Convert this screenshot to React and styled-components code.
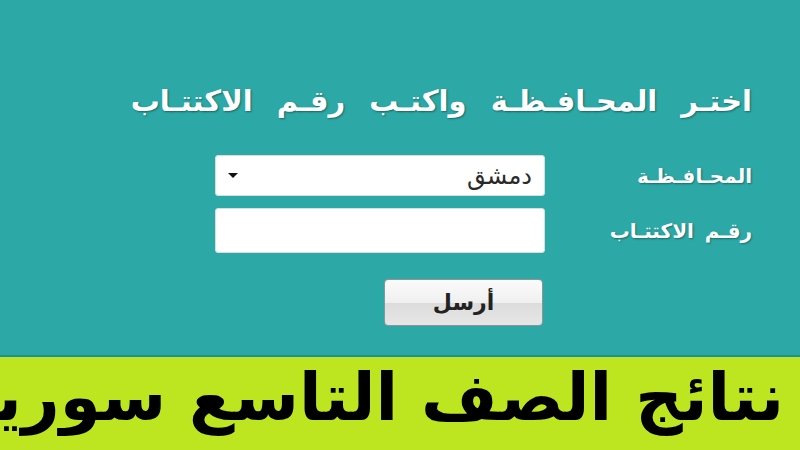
import React from "react";
import styled, { createGlobalStyle } from "styled-components";

const GlobalStyle = createGlobalStyle`
  html, body {
    margin: 0;
    padding: 0;
    width: 800px;
    height: 450px;
    overflow: hidden;
  }
  body {
    font-family: "DejaVu Sans", "Noto Sans", sans-serif;
  }
`;

const App = () => {
  return (
    <Page dir="rtl">
      <GlobalStyle />
      <Panel>
        <Title>اختـر المحـافـظـة واكتـب رقـم الاكتتـاب</Title>
        <Form onSubmit={(e) => e.preventDefault()}>
          <Label>المحـافـظـة</Label>
          <SelectBox>
            <span>دمشق</span>
            <Caret />
          </SelectBox>
          <Label>رقـم الاكتتـاب</Label>
          <TextInput type="text" />
          <span />
          <ButtonCell>
            <SendButton type="submit">أرسل</SendButton>
          </ButtonCell>
        </Form>
      </Panel>
      <Banner>
        <BannerText>نتائج الصف التاسع سوريا</BannerText>
      </Banner>
    </Page>
  );
};

export default App;

const Page = styled.div`
  width: 800px;
  height: 450px;
  display: flex;
  flex-direction: column;
  overflow: hidden;
`;

const Panel = styled.div`
  height: 357px;
  flex-shrink: 0;
  background-color: #2ca9a6;
  border-bottom: 2px solid #1e9096;
  padding: 84px 48px 0 0;
  box-sizing: border-box;
`;

const Title = styled.h2`
  margin: 0;
  font-size: 29px;
  font-weight: bold;
  word-spacing: 14px;
  color: #fff;
  text-shadow: 1px 1px 2px rgba(0, 40, 40, 0.5);
`;

const Form = styled.form`
  display: grid;
  grid-template-columns: 207px 330px;
  grid-template-rows: 41px 45px auto;
  row-gap: 12px;
  margin-top: 37px;
`;

const Label = styled.label`
  align-self: center;
  font-size: 20px;
  font-weight: bold;
  word-spacing: 4px;
  color: #fff;
  text-shadow: 1px 1px 2px rgba(0, 40, 40, 0.45);
`;

const SelectBox = styled.div`
  display: flex;
  align-items: center;
  justify-content: space-between;
  padding: 0 12px;
  background: #fff;
  border: 1px solid #d6dede;
  border-radius: 3px;
  font-size: 24px;
  color: #2a2a2a;
`;

const Caret = styled.span`
  width: 0;
  height: 0;
  border-left: 5px solid transparent;
  border-right: 5px solid transparent;
  border-top: 5px solid #111;
`;

const TextInput = styled.input`
  margin: 0;
  padding: 0;
  background: #fff;
  border: 1px solid #d6dede;
  border-radius: 3px;
  box-sizing: border-box;
`;

const ButtonCell = styled.div`
  display: flex;
  align-items: flex-start;
  padding: 14px 2px 0 0;
`;

const SendButton = styled.button`
  width: 159px;
  height: 47px;
  border: 1px solid #8d9596;
  border-radius: 4px;
  background: linear-gradient(#fbfbfb 0%, #f0f0f0 50%, #dcdcdc 51%, #e6e6e6 100%);
  font-family: "DejaVu Sans", sans-serif;
  font-size: 22px;
  font-weight: bold;
  color: #222;
  cursor: pointer;
`;

const Banner = styled.div`
  flex: 1;
  background-color: #bde620;
  overflow: hidden;
  padding-right: 16px;
`;

const BannerText = styled.div`
  font-size: 66px;
  font-weight: bold;
  line-height: 1;
  color: #000;
  white-space: nowrap;
  margin-top: 8px;
`;
